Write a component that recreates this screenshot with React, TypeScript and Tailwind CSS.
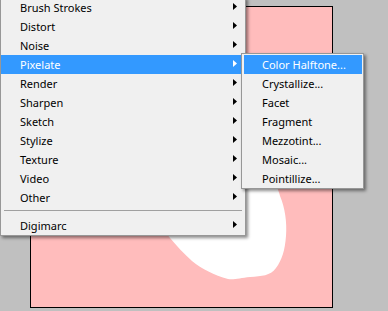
import React from "react";

const mainItems = [
  "Brush Strokes",
  "Distort",
  "Noise",
  "Pixelate",
  "Render",
  "Sharpen",
  "Sketch",
  "Stylize",
  "Texture",
  "Video",
  "Other",
];

const subItems = [
  "Color Halftone...",
  "Crystallize...",
  "Facet",
  "Fragment",
  "Mezzotint...",
  "Mosaic...",
  "Pointillize...",
];

function Arrow({ white }: { white?: boolean }) {
  return (
    <svg width="4" height="7" viewBox="0 0 4 7" className="mt-[-2px]">
      <path d="M0 0 L4 3.5 L0 7 Z" fill={white ? "#ffffff" : "#000000"} />
    </svg>
  );
}

function MainRow({ label, active }: { label: string; active?: boolean }) {
  return (
    <div
      className={
        "flex h-[19px] items-center justify-between pl-[19px] pr-[8px] " +
        (active ? "bg-[#3399ff] text-white" : "text-black")
      }
    >
      <span className="leading-none">{label}</span>
      <Arrow white={active} />
    </div>
  );
}

export default function App() {
  return (
    <div
      className="relative h-[311px] w-[388px] overflow-hidden bg-[#c0c0c0] pl-[30px] pt-[6px] text-[11px]"
      style={{ fontFamily: '"Noto Sans", "Open Sans", sans-serif' }}
    >
      <div className="relative h-[302px] w-[303px] overflow-hidden border border-black bg-[#ffbcbc]">
        <svg width="301" height="300" className="absolute left-0 top-0">
          <g transform="translate(-31,-7)">
            <path
              d="M 200 150 L 268 170 C 274 180 278 188 280 196 C 285 208 287 222 286 236 C 285 250 282 260 276 268 C 270 276 262 276 250 277 C 240 278 234 280 228 279 C 214 275 202 269 192 261 C 184 254 177 246 170 238 C 160 225 150 200 160 180 Z"
              fill="#ffffff"
            />
          </g>
        </svg>
      </div>

      {/* main menu */}
      <div className="absolute left-0 top-[-3px] flex w-[246px] flex-col border border-[#979797] bg-[#f0f0f0] shadow-[2px_2px_3px_rgba(0,0,0,0.45)]">
        {mainItems.map((it) => (
          <MainRow key={it} label={it} active={it === "Pixelate"} />
        ))}
        <div className="h-[9px] px-[3px] pt-[3px]">
          <div className="h-px bg-[#a0a0a0]" />
        </div>
        <MainRow label="Digimarc" />
      </div>

      {/* submenu */}
      <div className="absolute left-[241px] top-[53px] flex w-[123px] flex-col border border-[#979797] bg-[#f0f0f0] pl-[2px] pr-px pt-px shadow-[2px_2px_3px_rgba(0,0,0,0.45)]">
        {subItems.map((it) => (
          <div
            key={it}
            className={
              "flex h-[19px] items-center pl-[18px] " +
              (it === "Color Halftone..." ? "bg-[#3399ff] text-white" : "text-black")
            }
          >
            <span className="leading-none whitespace-nowrap">{it}</span>
          </div>
        ))}
      </div>
    </div>
  );
}
